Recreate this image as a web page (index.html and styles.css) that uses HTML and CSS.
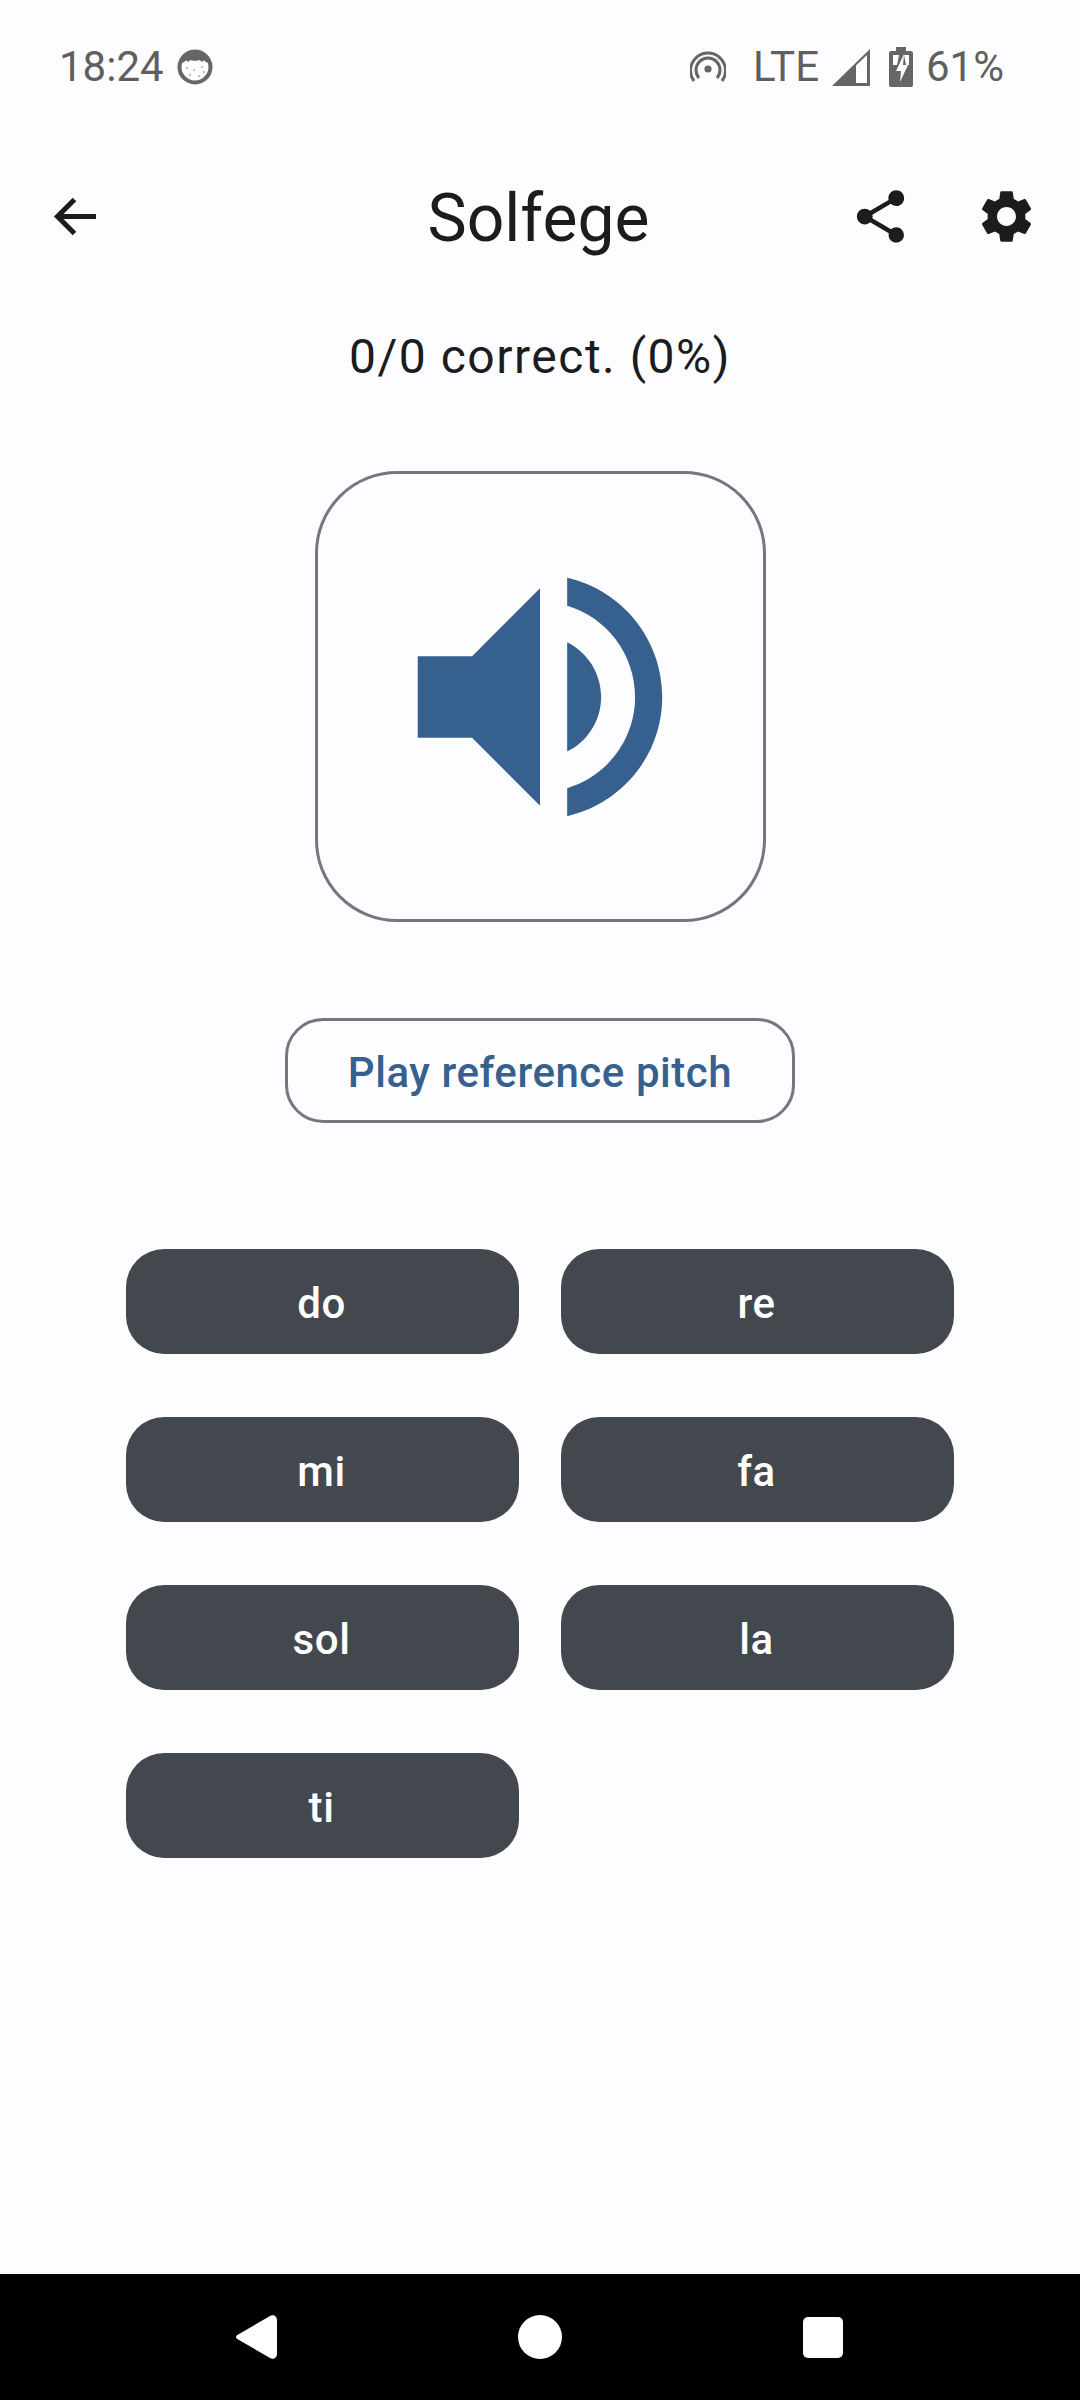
FILE: index.html
```html
<!DOCTYPE html>
<html lang="en">
<head>
<meta charset="utf-8">
<title>Solfege</title>
<link rel="stylesheet" href="styles.css">
</head>
<body>
<div class="screen">
  <div class="status-bar">
    <div class="status-left">
      <span class="time">18:24</span>
      <svg class="st-avatar" viewBox="0 0 36 36"><circle cx="18" cy="18" r="15.5" fill="#fff" stroke="#666" stroke-width="4"/><path d="M4 14C6 5 12 3 18 3s12 2 14 11c-2 0-4-1-5-3-1 2-3 2-4 0-2 1-8 1-10 0-1 2-3 2-4 0-1 2-3 3-5 3z" fill="#666"/><g fill="#aaa"><circle cx="10" cy="19" r="1"/><circle cx="17" cy="21" r="1"/><circle cx="25" cy="18" r="1"/><circle cx="13" cy="26" r="1"/><circle cx="22" cy="27" r="1"/><circle cx="27" cy="23" r="1"/></g></svg>
    </div>
    <div class="status-right">
      <svg class="st-hotspot" viewBox="0 0 36 32"><circle cx="18" cy="18" r="3.600" fill="#666"/><path d="M9 27a12 12 0 1 1 18 0" fill="none" stroke="#666" stroke-width="3"/><path d="M4 30A17.500 17.500 0 1 1 32 30" fill="none" stroke="#666" stroke-width="3"/></svg>
      <span class="lte">LTE</span>
      <svg class="st-signal" viewBox="0 0 38 37"><path d="M38 0V37H0z" fill="#666"/><path d="M24 16.500L35 6V34H24z" fill="#fff"/></svg>
      <svg class="st-battery" viewBox="0 0 24 40"><path d="M7 0h10v4h5a2 2 0 0 1 2 2v32a2 2 0 0 1-2 2H2a2 2 0 0 1-2-2V6a2 2 0 0 1 2-2h5z" fill="#666"/><path d="M4 8h6l-2 10H4zM15 8h5v10h-3z" fill="#fff"/><path d="M15 7l-8 17h5l-1 11 8-17h-5z" fill="#fff"/></svg>
      <span class="pct">61%</span>
    </div>
  </div>

  <header class="app-bar">
    <button class="icon-btn back" aria-label="Back"><svg viewBox="0 0 48 48" class="ic-back"><path d="M46 22.500H7.500M24.500 5.500 7.500 22.500l17 17" fill="none" stroke="#1a1c1e" stroke-width="5"/></svg></button>
    <h1 class="title">Solfege</h1>
    <div class="actions">
      <svg class="ic-share" viewBox="0 0 24 24"><path d="M18 16.080c-.76 0-1.440.3-1.960.77L8.910 12.700c.05-.23.09-.46.09-.7s-.04-.47-.09-.7l7.050-4.110c.54.5 1.250.81 2.040.81 1.660 0 3-1.340 3-3s-1.340-3-3-3-3 1.340-3 3c0 .24.04.47.09.7L8.040 9.810C7.500 9.310 6.790 9 6 9c-1.660 0-3 1.340-3 3s1.340 3 3 3c.79 0 1.500-.31 2.040-.81l7.120 4.160c-.05.21-.08.43-.08.65 0 1.610 1.310 2.920 2.920 2.920s2.920-1.310 2.920-2.920-1.310-2.920-2.920-2.920z" fill="#1a1c1e"/></svg>
      <svg class="ic-gear" viewBox="0 0 24 24"><path d="M19.140 12.940c.04-.3.06-.61.06-.94 0-.32-.02-.64-.07-.94l2.030-1.580c.18-.14.23-.41.12-.61l-1.920-3.320c-.12-.22-.37-.29-.59-.22l-2.390.96c-.5-.38-1.030-.7-1.620-.94l-.36-2.540c-.04-.24-.24-.41-.48-.41h-3.840c-.24 0-.43.17-.47.41l-.36 2.540c-.59.24-1.130.57-1.620.94l-2.390-.96c-.22-.08-.47 0-.59.22L2.740 8.870c-.12.21-.08.47.12.61l2.030 1.580c-.05.3-.09.63-.09.94s.02.64.07.94l-2.030 1.580c-.18.14-.23.41-.12.61l1.920 3.320c.12.22.37.29.59.22l2.390-.96c.5.38 1.030.7 1.620.94l.36 2.540c.05.24.24.41.48.41h3.840c.24 0 .44-.17.47-.41l.36-2.540c.59-.24 1.130-.56 1.620-.94l2.390.96c.22.08.47 0 .59-.22l1.920-3.320c.12-.22.07-.47-.12-.61l-2.010-1.580zM12 15.600c-1.980 0-3.600-1.620-3.600-3.600s1.620-3.600 3.600-3.600 3.600 1.620 3.600 3.600-1.620 3.600-3.600 3.600z" fill="#1a1c1e"/></svg>
    </div>
  </header>

  <main class="content">
    <p class="score">0/0 correct. (0%)</p>
    <button class="speaker" aria-label="Play"><svg viewBox="0 0 24 24" class="ic-speaker"><path d="M3 9v6h4l5 5V4L7 9H3zm13.500 3c0-1.770-1.020-3.290-2.500-4.030v8.050c1.480-.73 2.500-2.250 2.500-4.020zM14 3.230v2.060c2.890.86 5 3.540 5 6.710s-2.110 5.850-5 6.710v2.060c4.010-.91 7-4.490 7-8.770s-2.990-7.860-7-8.770z" fill="#36618e"/></svg></button>
    <button class="reference">Play reference pitch</button>
    <div class="notes">
      <button class="note">do</button>
      <button class="note">re</button>
      <button class="note">mi</button>
      <button class="note">fa</button>
      <button class="note">sol</button>
      <button class="note">la</button>
      <button class="note">ti</button>
    </div>
  </main>

  <nav class="nav-bar">
    <svg class="nav-back" viewBox="0 0 41 44"><path d="M3 19 34 1c3-2 7 0 7 4v34c0 4-4 6-7 4L3 25c-4-2-4-4 0-6z" fill="#fff"/></svg>
    <span class="nav-home"></span>
    <span class="nav-square"></span>
  </nav>
</div>
</body>
</html>
```
FILE: styles.css
```css
* { box-sizing: border-box; }
html, body { margin: 0; padding: 0; }
body { background: #fdfcff; font-family: Roboto, "Noto Sans", sans-serif; }
.screen { width: 1080px; height: 2400px; display: flex; flex-direction: column; background: #fdfcff; }

.status-bar { height: 130px; padding: 47px 76px 0 59px; display: flex; justify-content: space-between; align-items: flex-start; color: #5f5f5f; }
.status-left, .status-right { display: flex; align-items: center; height: 40px; }
.time { font-size: 42px; line-height: 40px; }
.st-avatar { width: 36px; height: 36px; margin-left: 13px; }
.st-hotspot { width: 36px; height: 32px; margin-right: 27px; }
.lte { font-size: 42px; line-height: 40px; }
.st-signal { width: 38px; height: 37px; margin-left: 13px; }
.st-battery { width: 24px; height: 40px; margin-left: 19px; }
.pct { font-size: 42px; line-height: 40px; margin-left: 13px; }

.app-bar { height: 176px; position: relative; display: flex; align-items: center; justify-content: center; }
.icon-btn { border: 0; background: none; padding: 0; }
.back { position: absolute; left: 50px; top: 64px; width: 48px; height: 48px; }
.ic-back { width: 48px; height: 48px; display: block; }
.title { margin: 0 3px 0 0; font-size: 66px; line-height: 80px; font-weight: 400; color: #1a1c1e; position: relative; top: 1px; }
.actions { position: absolute; right: 42.500px; top: 54.500px; display: flex; align-items: center; gap: 63px; }
.ic-share { width: 63px; height: 63px; display: block; }
.ic-gear { width: 63px; height: 63px; display: block; }

.content { flex: 1; display: flex; flex-direction: column; align-items: center; }
.score { margin: 21px 0 0; font-size: 48px; line-height: 60px; letter-spacing: 1.500px; color: #1a1c1e; }
.speaker { margin-top: 84px; width: 451px; height: 451px; border: 3px solid #74777f; border-radius: 82px; background: none; padding: 0; display: flex; align-items: center; justify-content: center; }
.ic-speaker { width: 326px; height: 326px; display: block; }
.reference { margin-top: 96px; width: 510px; height: 105px; border: 3px solid #74777f; border-radius: 38px; background: none; padding: 3px 0 0; font-family: inherit; font-size: 42px; font-weight: 500; letter-spacing: .55px; color: #36618e; }
.notes { margin-top: 126px; width: 828px; display: grid; grid-template-columns: 393px 393px; column-gap: 42px; row-gap: 63px; }
.note { height: 105px; border: 0; border-radius: 38px; background: #43474e; color: #fff; padding: 3px 2px 0 0; font-family: inherit; font-size: 42px; font-weight: 500; letter-spacing: .55px; }

.nav-bar { height: 126px; background: #000; position: relative; flex: none; }
.nav-back { position: absolute; left: 236px; top: 41px; width: 41px; height: 44px; }
.nav-home { position: absolute; left: 518px; top: 41px; width: 44px; height: 44px; border-radius: 50%; background: #fff; }
.nav-square { position: absolute; left: 803px; top: 43px; width: 40px; height: 41px; border-radius: 5px; background: #fff; }
```
